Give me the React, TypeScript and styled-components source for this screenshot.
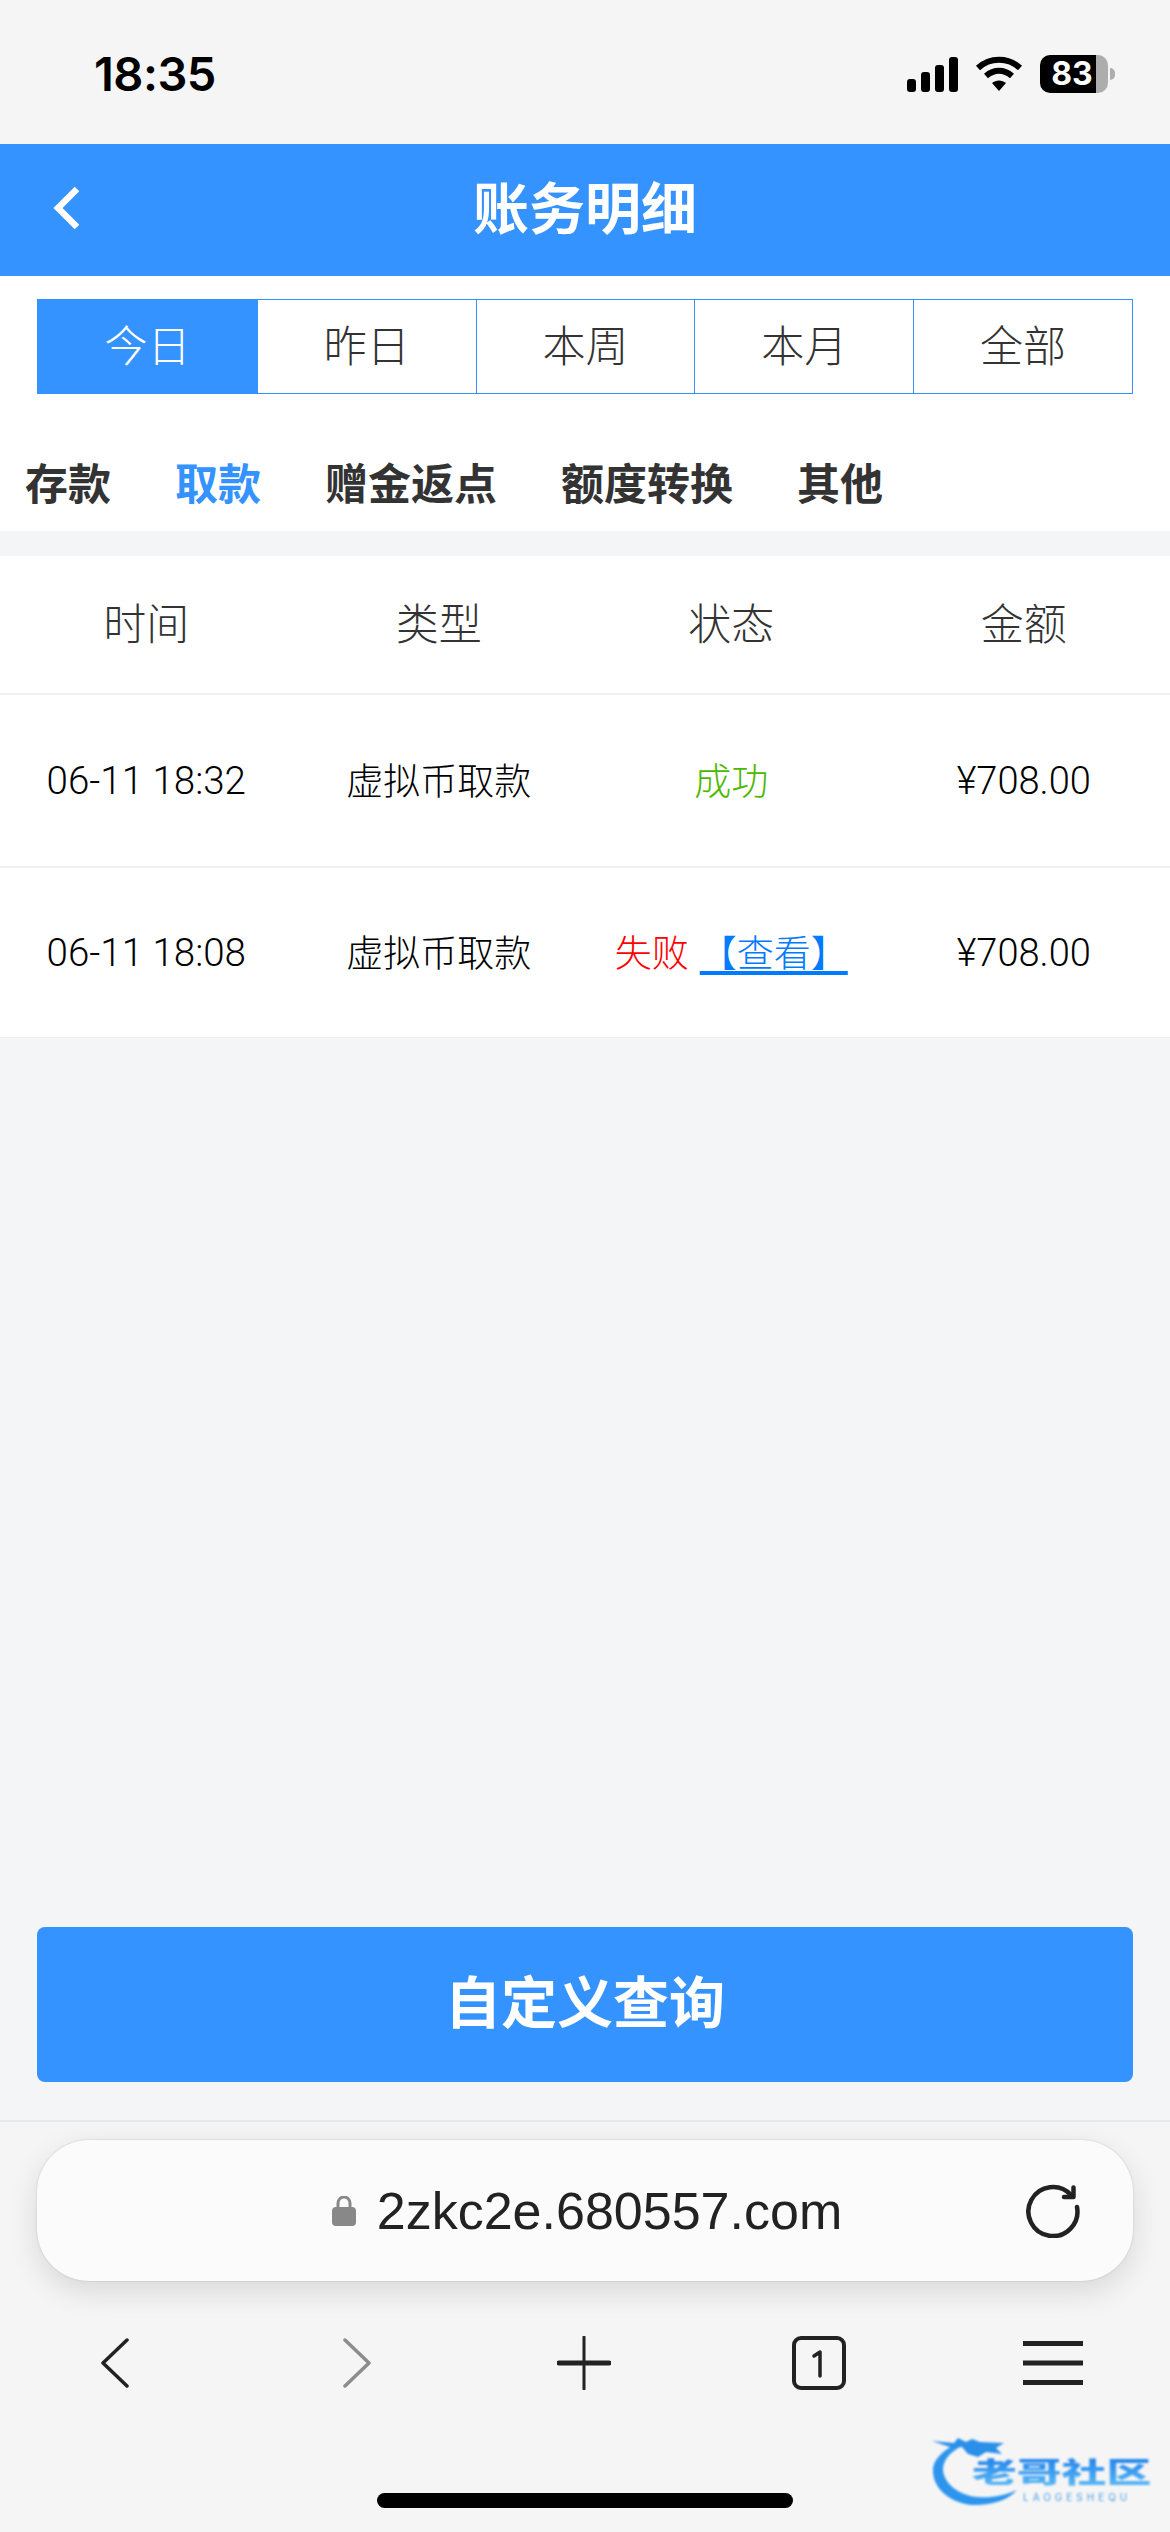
import React from "react";
import styled, { createGlobalStyle } from "styled-components";

const CJK = `"Noto Sans CJK SC", "Noto Sans", sans-serif`;
const LATIN = `Inter, "Noto Sans CJK SC", sans-serif`;
const HELV = `"Liberation Sans", "Noto Sans CJK SC", sans-serif`;
const THIN = `Roboto, "Noto Sans CJK SC", sans-serif`;

const Global = createGlobalStyle`
  html, body { margin: 0; padding: 0; background: #f4f5f7; }
  * { box-sizing: border-box; }
`;

const Page = styled.div`
  width: 1170px;
  height: 2532px;
  display: flex;
  flex-direction: column;
  position: relative;
  overflow: hidden;
  background: #f4f5f7;
  font-family: ${CJK};
`;

const StatusBar = styled.div`
  height: 144px;
  flex: none;
  background: #f5f5f5;
  display: flex;
  justify-content: space-between;
  align-items: flex-start;
  padding: 46px 62px 0 94px;
`;

const Clock = styled.div`
  font-family: ${LATIN};
  font-size: 47px;
  line-height: 56px;
  font-weight: 600;
  color: #000;
  letter-spacing: -0.5px;
`;

const StatusIcons = styled.div`
  display: flex;
  align-items: center;
  gap: 17px;
  margin-top: 9px;
`;

const Battery = styled.div`
  width: 68px;
  height: 38px;
  border-radius: 10px;
  background: linear-gradient(90deg, #000 0 82%, #adadad 82% 100%);
  color: #fff;
  font-family: ${LATIN};
  font-weight: 700;
  font-size: 32px;
  line-height: 38px;
  text-align: center;
  padding-right: 4px;
  position: relative;
  &::after {
    content: "";
    position: absolute;
    right: -7px;
    top: 13px;
    width: 5px;
    height: 12px;
    border-radius: 0 5px 5px 0;
    background: #adadad;
  }
`;

const Header = styled.header`
  height: 132px;
  flex: none;
  background: #3593ff;
  position: relative;
  display: flex;
  align-items: center;
  justify-content: center;
  padding-bottom: 10px;
`;

const BackButton = styled.div`
  position: absolute;
  left: 50px;
  top: 36px;
  display: flex;
`;

const Title = styled.h1`
  margin: 0;
  font-size: 56px;
  line-height: 70px;
  font-weight: 700;
  color: #fff;
`;

const FilterPanel = styled.section`
  flex: none;
  height: 255px;
  background: #fff;
  padding-top: 23px;
`;

const Segments = styled.div`
  margin: 0 37px;
  height: 95px;
  display: grid;
  grid-template-columns: repeat(5, 1fr);
  border: 1px solid #3593ff;
`;

const Segment = styled.div<{ $active?: boolean }>`
  display: flex;
  align-items: center;
  justify-content: center;
  padding-bottom: 8px;
  font-size: 43px;
  font-weight: 300;
  color: ${(p) => (p.$active ? "#fff" : "#333")};
  background: ${(p) => (p.$active ? "#3593ff" : "#fff")};
  & + & { border-left: 1px solid #3593ff; }
`;

const Tabs = styled.div`
  display: flex;
  gap: 64px;
  padding: 58px 0 0 25px;
`;

const Tab = styled.div<{ $active?: boolean }>`
  font-size: 43px;
  line-height: 58px;
  font-weight: 700;
  color: ${(p) => (p.$active ? "#3593ff" : "#333")};
`;

const Main = styled.main`
  flex: 1;
  display: flex;
  flex-direction: column;
  padding-top: 25px;
`;

const Table = styled.div`
  background: #fff;
  border-bottom: 1px solid #f0f0f0;
`;

const Row = styled.div<{ $head?: boolean }>`
  height: ${(p) => (p.$head ? "139px" : "171px")};
  display: grid;
  grid-template-columns: repeat(4, 1fr);
  align-items: center;
  border-bottom: ${(p) => (p.$head ? "2px solid #f0f0f0" : "none")};
  & + & + & { border-top: 2px solid #f0f0f0; }
`;

const HeadCell = styled.div`
  text-align: center;
  font-size: 43px;
  font-weight: 300;
  color: #333;
  padding-bottom: 7px;
`;

const Cell = styled.div`
  text-align: center;
  font-family: ${THIN};
  font-size: 38px;
  font-weight: 300;
  color: #000;
  white-space: nowrap;
`;

const TimeCell = styled(Cell)`
  font-size: 38.5px;
`;

const TypeCell = styled(Cell)`
  font-family: ${CJK};
  font-size: 37px;
  font-weight: 300;
  padding-bottom: 4px;
`;

const StatusCell = styled(Cell)<{ $color?: string }>`
  font-family: ${CJK};
  font-size: 37px;
  font-weight: 300;
  color: ${(p) => p.$color};
  display: flex;
  justify-content: center;
  gap: 11px;
  padding-bottom: 4px;
`;

const ViewLink = styled.span`
  color: #007aff;
  text-decoration: underline;
  text-decoration-thickness: 4px;
  text-underline-offset: 4px;
`;

const QueryButton = styled.div`
  margin: auto 37px 38px;
  height: 155px;
  border-radius: 8px;
  background: #3593ff;
  color: #fff;
  font-size: 56px;
  font-weight: 700;
  padding-bottom: 12px;
  display: flex;
  align-items: center;
  justify-content: center;
`;

const Browser = styled.footer`
  flex: none;
  height: 412px;
  background: #f5f5f5;
  border-top: 2px solid #e8e8e8;
  padding-top: 18px;
  display: flex;
  flex-direction: column;
`;

const UrlBar = styled.div`
  margin: 0 37px;
  height: 141px;
  border-radius: 52px;
  background: #fbfbfb;
  box-shadow: 0 10px 30px rgba(0, 0, 0, 0.12), 0 0 2px rgba(0, 0, 0, 0.18);
  position: relative;
  display: flex;
  align-items: center;
  justify-content: center;
  gap: 21px;
  padding-left: 4px;
`;

const UrlText = styled.div`
  font-family: ${HELV};
  font-size: 52px;
  font-weight: 400;
  color: #222;
`;

const Reload = styled.div`
  position: absolute;
  right: 53px;
  top: 44px;
  display: flex;
`;

const NavRow = styled.div`
  display: flex;
  justify-content: space-between;
  align-items: center;
  padding: 0 87px 0 85px;
  margin-top: 54px;
  height: 56px;
`;

const NavItem = styled.div`
  width: 60px;
  display: flex;
  justify-content: center;
`;

const ForwardItem = styled(NavItem)`
  margin-left: 7px;
  margin-right: -7px;
`;

const HomeBar = styled.div`
  width: 416px;
  height: 15px;
  border-radius: 8px;
  background: #000;
  margin: 102px auto 0;
`;

const Watermark = styled.div`
  position: absolute;
  left: 932px;
  top: 2430px;
  width: 224px;
  height: 78px;
  filter: blur(0.8px);
`;

const WatermarkName = styled.div`
  position: absolute;
  left: 40px;
  top: 26px;
  font-size: 28px;
  line-height: 30px;
  font-weight: 900;
  white-space: nowrap;
  transform: scaleX(1.6);
  transform-origin: left center;
  background: linear-gradient(180deg, #1c80ea, #5bb8f6);
  -webkit-background-clip: text;
  background-clip: text;
  color: transparent;
`;

const WatermarkSub = styled.div`
  position: absolute;
  left: 91px;
  top: 62px;
  font-family: ${LATIN};
  font-size: 10px;
  line-height: 11px;
  letter-spacing: 4px;
  color: #4a9fe8;
  white-space: nowrap;
`;

const Chevron = ({ d, color }: { d: string; color: string }) => (
  <svg width="30" height="50" viewBox="0 0 30 50" fill="none" stroke={color} strokeWidth="3.5" strokeLinecap="round" strokeLinejoin="round">
    <path d={d} />
  </svg>
);

const rows = [
  { time: "06-11 18:32", ok: true },
  { time: "06-11 18:08", ok: false },
];

export default function App() {
  return (
    <Page>
      <Global />
      <StatusBar>
        <Clock>18:35</Clock>
        <StatusIcons>
          <svg width="51" height="35" viewBox="0 0 51 35" fill="#000">
            <rect x="0" y="22" width="9" height="13" rx="3" />
            <rect x="14" y="15" width="9" height="20" rx="3" />
            <rect x="28" y="8" width="9" height="27" rx="3" />
            <rect x="42" y="0" width="9" height="35" rx="3" />
          </svg>
          <svg width="48" height="36" viewBox="0 0 48 36" fill="none" stroke="#000" strokeWidth="6">
            <path d="M3 12C15 1 33 1 45 12" />
            <path d="M11 20c8-7 18-7 26 0" />
            <path d="M17 27l7 8 7-8c-4-3.500-10-3.500-14 0z" fill="#000" stroke="none" />
          </svg>
          <Battery>83</Battery>
        </StatusIcons>
      </StatusBar>
      <Header>
        <BackButton>
          <svg width="32" height="56" viewBox="0 0 32 56" fill="none" stroke="#fff" strokeWidth="6.500" strokeLinejoin="miter">
            <path d="M27 9L8 28l19 19" />
          </svg>
        </BackButton>
        <Title>账务明细</Title>
      </Header>
      <FilterPanel>
        <Segments>
          {["今日", "昨日", "本周", "本月", "全部"].map((s, i) => (
            <Segment key={s} $active={i === 0}>{s}</Segment>
          ))}
        </Segments>
        <Tabs>
          {["存款", "取款", "赠金返点", "额度转换", "其他"].map((t) => (
            <Tab key={t} $active={t === "取款"}>{t}</Tab>
          ))}
        </Tabs>
      </FilterPanel>
      <Main>
        <Table>
          <Row $head>
            {["时间", "类型", "状态", "金额"].map((h) => (
              <HeadCell key={h}>{h}</HeadCell>
            ))}
          </Row>
          {rows.map((r) => (
            <Row key={r.time}>
              <TimeCell>{r.time}</TimeCell>
              <TypeCell>虚拟币取款</TypeCell>
              {r.ok ? (
                <StatusCell $color="#4cb800">成功</StatusCell>
              ) : (
                <StatusCell $color="#ff0000">
                  失败<ViewLink>【查看】</ViewLink>
                </StatusCell>
              )}
              <Cell>¥708.00</Cell>
            </Row>
          ))}
        </Table>
        <QueryButton>自定义查询</QueryButton>
      </Main>
      <Browser>
        <UrlBar>
          <svg width="24" height="30" viewBox="0 0 24 30" fill="#888">
            <rect x="0" y="11" width="24" height="19" rx="4" />
            <path d="M6 12V7a6 6 0 0 1 12 0v5" fill="none" stroke="#888" strokeWidth="3" />
          </svg>
          <UrlText>2zkc2e.680557.com</UrlText>
          <Reload>
            <svg width="54" height="54" viewBox="0 0 54 54" fill="none" stroke="#222" strokeWidth="4.500" strokeLinecap="round" strokeLinejoin="round">
              <path d="M51 23A24.500 24.500 0 1 1 45 11" />
              <path d="M47.500 3.500V13H38" />
            </svg>
          </Reload>
        </UrlBar>
        <NavRow>
          <NavItem>
            <Chevron d="M27 2L3 25L27 48" color="#222" />
          </NavItem>
          <ForwardItem>
            <Chevron d="M3 2l24 23L3 48" color="#8c8c8c" />
          </ForwardItem>
          <NavItem>
            <svg width="54" height="54" viewBox="0 0 54 54" stroke="#222" strokeLinecap="round">
              <path d="M2 27h50" strokeWidth="5" />
              <path d="M27 1v52" strokeWidth="3" />
            </svg>
          </NavItem>
          <NavItem>
            <svg width="54" height="54" viewBox="0 0 54 54" fill="none">
              <rect x="2" y="2" width="50" height="50" rx="7" stroke="#222" strokeWidth="4" />
              <path d="M22 20l6-4v24" stroke="#222" strokeWidth="3.500" strokeLinecap="round" strokeLinejoin="round" />
            </svg>
          </NavItem>
          <NavItem>
            <svg width="60" height="44" viewBox="0 0 60 44" stroke="#222" strokeWidth="5">
              <path d="M0 2.500h60M0 22h60M0 41.500h60" />
            </svg>
          </NavItem>
        </NavRow>
        <HomeBar />
      </Browser>
      <Watermark>
        <svg width="90" height="78" viewBox="0 0 90 78" fill="none">
          <path d="M24 14C8 22 0 32 1 42C2 62 24 76 46 75C62 74 76 70 85 60C72 66 58 68 46 67C28 66 12 54 11 40C11 30 18 22 30 16Z" fill="#2d95ee" />
          <path d="M0 11L22 13L26 8L34 12L40 9L48 12L72 13L64 18L70 24L54 22L46 27L36 24L30 17L18 17Z" fill="#2a8fe8" />
        </svg>
        <WatermarkName>老哥社区</WatermarkName>
        <WatermarkSub>LAOGESHEQU</WatermarkSub>
      </Watermark>
    </Page>
  );
}
